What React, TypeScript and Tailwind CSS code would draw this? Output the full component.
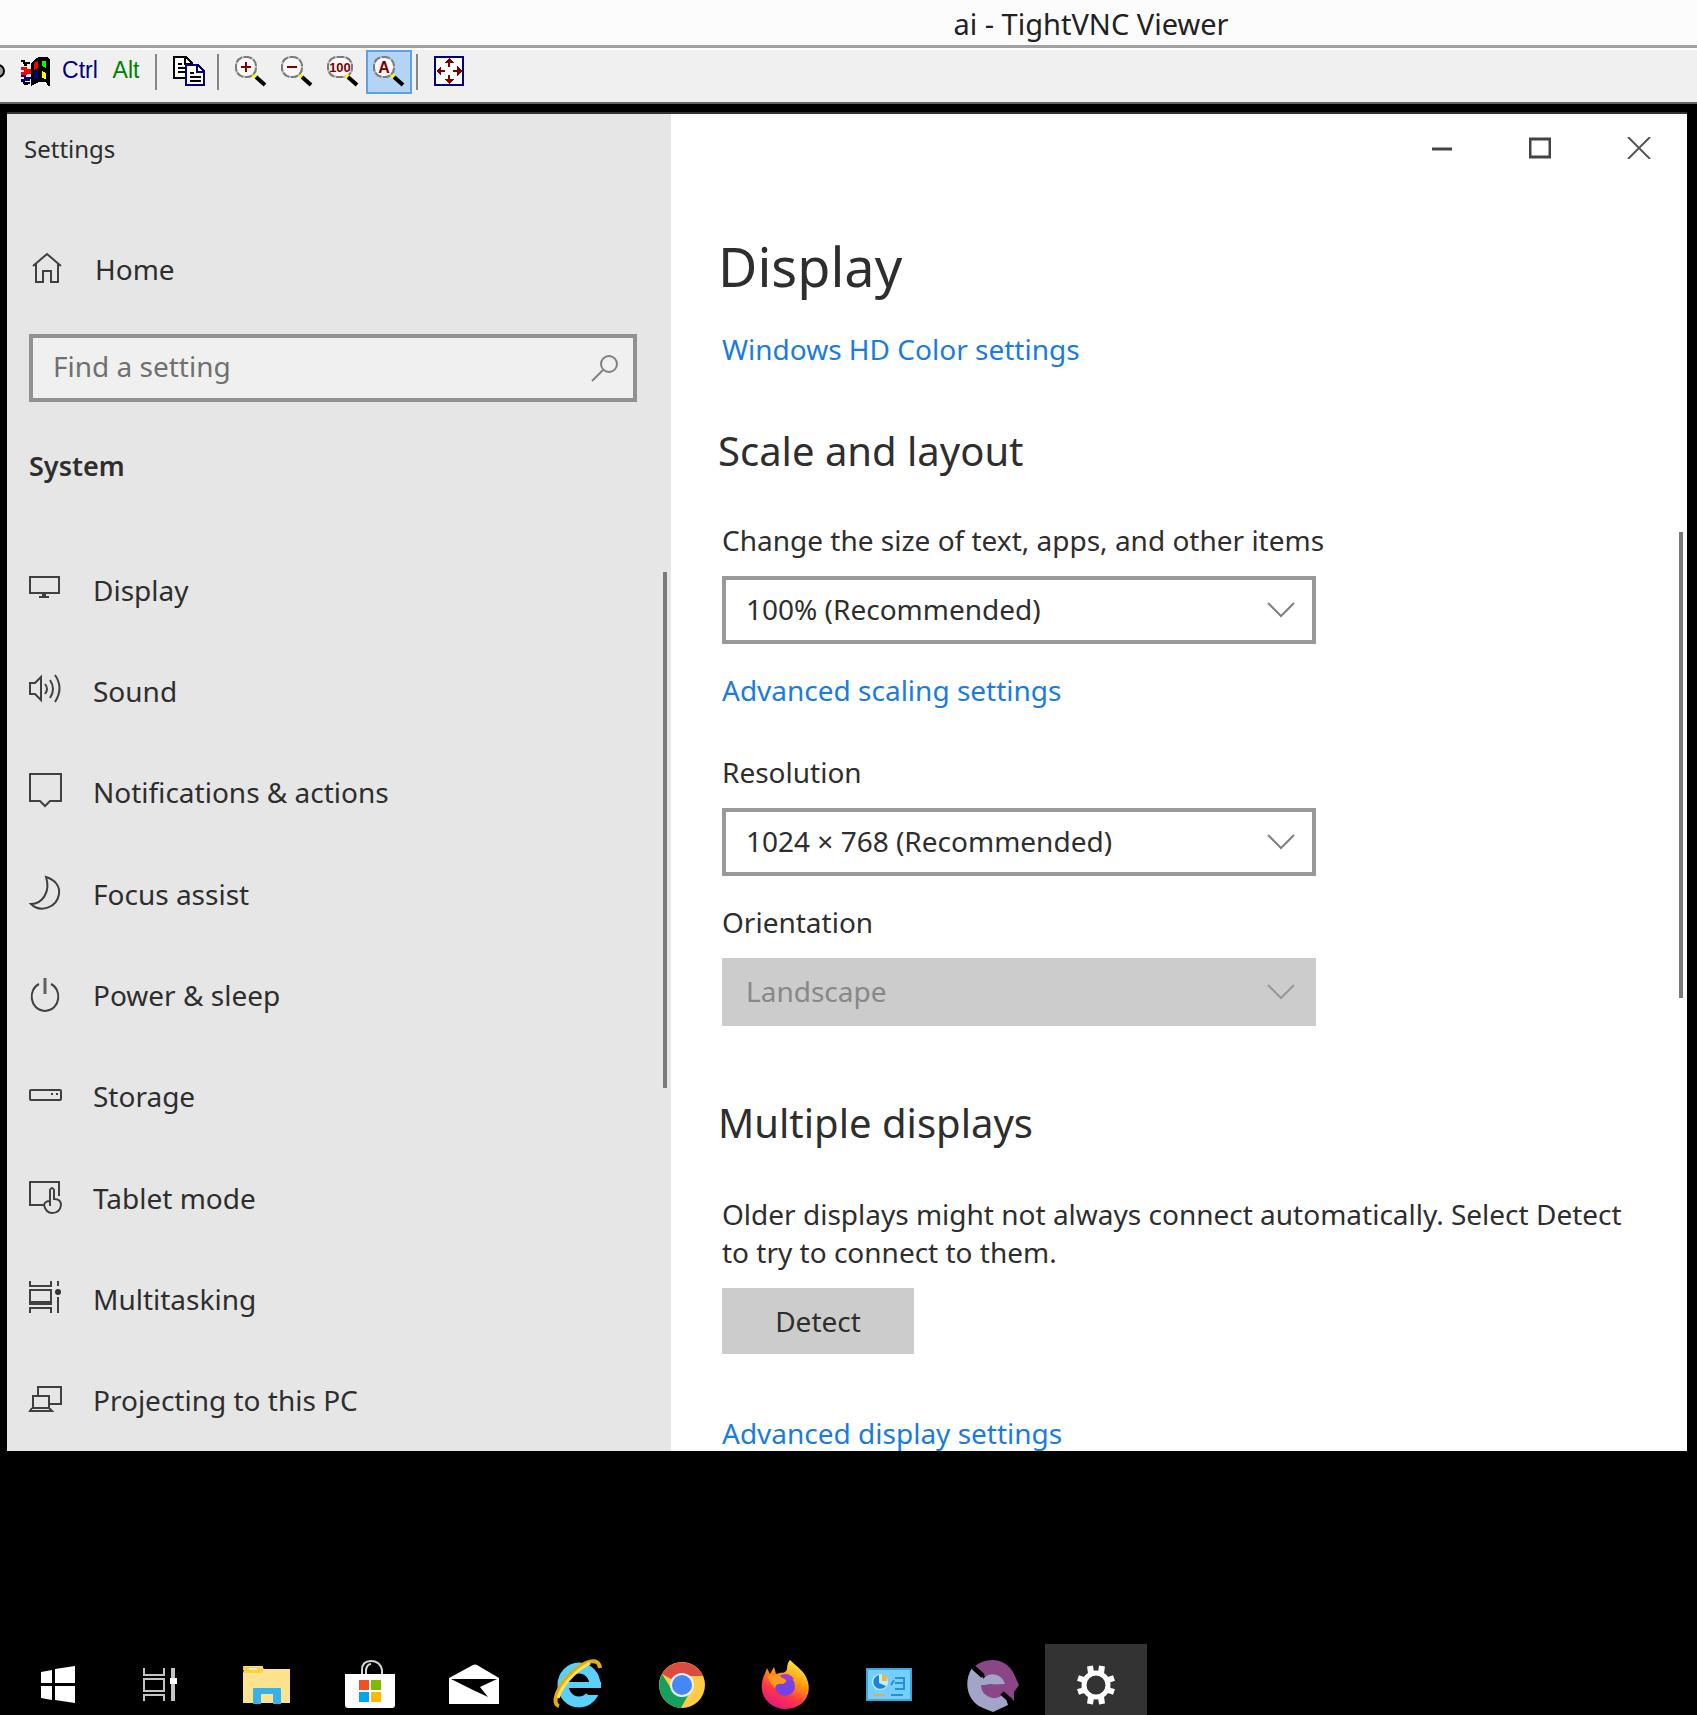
import { useState } from "react";
import type { ReactNode } from "react";

/* ---------- viewer toolbar icons ---------- */

function Magnifier({ children, wide = false }: { children: ReactNode; wide?: boolean }) {
  return (
    <svg width="32" height="32" viewBox="0 0 32 32" aria-hidden="true">
      <rect x="1" y="1" width={wide ? 24 : 20} height="20" rx="9" fill="#f8f8f8" stroke="#b4b4b4" strokeWidth="2" />
      <rect
        x="1"
        y="1"
        width={wide ? 24 : 20}
        height="20"
        rx="9"
        fill="none"
        stroke="#7b7b7b"
        strokeWidth="2"
        strokeDasharray="7 2"
      />
      {children}
      <path d="M19 19l3 3" stroke="#ffff00" strokeWidth="4" />
      <path d="M21 21l9 8" stroke="#000" strokeWidth="4" />
    </svg>
  );
}

function FlagIcon() {
  return (
    <svg width="32" height="32" viewBox="0 0 32 32" shapeRendering="crispEdges" aria-hidden="true">
      <path d="M11 7l4-4 4-2h8l3 2v27h-2l-2-4h-7l-4 2-4 2z" fill="#000" />
      <path d="M1 5h3v2h6M1 25h3v2h6M4 9h3M4 28h4" stroke="#000" strokeWidth="2" fill="none" />
      <path d="M1 12h4v2h6M1 17h4v-1h6" stroke="#ff0000" strokeWidth="3" fill="none" />
      <path d="M1 20h4v2h6M1 24h9" stroke="#000080" strokeWidth="2" fill="none" />
      <path d="M14 7l4-2v7l-4 2z" fill="#ff0000" />
      <path d="M22 5h4v7l-4-2z" fill="#00ff00" />
      <path d="M14 17l4-2v7l-4 2z" fill="#000080" />
      <path d="M22 15l4 2v6l-4-1z" fill="#ffff00" />
    </svg>
  );
}

function CopyIcon() {
  return (
    <svg width="32" height="32" viewBox="0 0 32 32" shapeRendering="crispEdges" aria-hidden="true">
      <path d="M1 1h12l6 6v15H1z" fill="#fff" stroke="#000" strokeWidth="2" />
      <path d="M12 1v7h7M5 8h4M5 12h8M5 16h8" fill="none" stroke="#000" strokeWidth="2" />
      <path d="M13 9h12l6 6v14H13z" fill="#fff" stroke="#000080" strokeWidth="2" />
      <path d="M24 9v7h7" fill="none" stroke="#000080" strokeWidth="2" />
      <path d="M17 17h4M17 21h11M17 25h11" stroke="#000" strokeWidth="2" />
    </svg>
  );
}

function FullScreenIcon() {
  return (
    <svg width="32" height="32" viewBox="0 0 32 32" shapeRendering="crispEdges" aria-hidden="true">
      <rect x="2" y="1" width="28" height="28" fill="#fff" stroke="#000080" strokeWidth="2" />
      <path
        d="M16 2l5 5h-4v4h-2V7h-4zM16 28l5-5h-4v-4h-2v4h-4zM3 15l5-5v4h4v2H8v4zM29 15l-5-5v4h-4v2h4v4z"
        fill="#800000"
      />
    </svg>
  );
}

/* ---------- settings icons ---------- */

function NavIcon({ children }: { children: ReactNode }) {
  return (
    <svg
      width="34"
      height="40"
      viewBox="2 0 34 40"
      fill="none"
      stroke="#404040"
      strokeWidth="2"
      className="shrink-0 overflow-visible"
      aria-hidden="true"
    >
      {children}
    </svg>
  );
}

const navItems: { name: string; icon: ReactNode }[] = [
  {
    name: "Display",
    icon: (
      <>
        <path d="M3 7h29v16H3zM12 27h10" />
        <path d="M17 23v4" strokeWidth="4" />
      </>
    ),
  },
  {
    name: "Sound",
    icon: <path d="M3 12h5l6-6v23l-6-6H3zM18 13q4 5 0 10M23 9q6 9 0 18M28 4q9 13 0 27" />,
  },
  {
    name: "Notifications & actions",
    icon: <path d="M3 2h31v27H23l-5 5-5-5H3z" />,
  },
  {
    name: "Focus assist",
    icon: <path d="M19 3C29 6 33 13 32 20C30 34 13 39 4 30C15 30 24 18 19 3z" />,
  },
  {
    name: "Power & sleep",
    icon: (
      <>
        <path d="M12 9C1 14 2 35 18 36C34 35 35 14 24 9" />
        <path d="M18 3v16" stroke="#606060" strokeWidth="3" />
      </>
    ),
  },
  {
    name: "Storage",
    icon: (
      <>
        <rect x="3" y="14" width="31" height="10" rx="1" />
        <path d="M24 18h2M29 18h2" />
      </>
    ),
  },
  {
    name: "Tablet mode",
    icon: <path d="M17 27H3V4h29v14M23 28V12q2-4 4 0v9q7 0 7 6q-1 8-9 8q-6 0-8-8q1-4 6-4" />,
  },
  {
    name: "Multitasking",
    icon: (
      <>
        <path d="M3 2v5h21V2M3 11h21v14H3zM3 34v-5h21v5M31 2v5M31 18v16" />
        <path d="M3 24h21" strokeWidth="4" />
        <circle cx="31" cy="13" r="3" fill="#333" stroke="none" />
      </>
    ),
  },
  {
    name: "Projecting to this PC",
    icon: <path d="M11 15V7h23v17H23M6 16h16v12H6zM5 28l-2 3h22l-3-3" />,
  },
];

/* ---------- taskbar icons ---------- */

const taskbarItems: { name: string; icon: ReactNode }[] = [
  {
    name: "Start",
    icon: <path d="M13 16l11-2v13H13zM27 13l20-3v17H27zM13 30h11v14l-11-2zM27 30h20v17l-20-3z" fill="#fff" />,
  },
  {
    name: "Task View",
    icon: (
      <g fill="none" stroke="#c4c4c4" strokeWidth="2">
        <path d="M12 12v7h20v-7M12 23h20v12H12zM12 45v-6h20v6" />
        <path d="M41 12v33" strokeWidth="4" />
        <rect x="38" y="22" width="7" height="6" fill="#fff" stroke="none" />
      </g>
    ),
  },
  {
    name: "File Explorer",
    icon: (
      <>
        <path d="M7 10h20v4H7z" fill="#f5c32c" />
        <path d="M7 17l2-7h16l3 3h26v34H7z" fill="#fde38d" />
        <path d="M9 11h16l3 3-3 3H8z" fill="#fcd03e" />
        <path d="M13 13h8" stroke="#d9f2e0" strokeWidth="2" />
        <path d="M17 48V33q0-1 1-1h26q1 0 1 1v15h-8V38H25v10z" fill="#36b1ea" />
      </>
    ),
  },
  {
    name: "Microsoft Store",
    icon: (
      <>
        <path d="M22 19V14q0-9 9-9t11 9v5M26 19v-5q1-6 5-6" fill="none" stroke="#d6d6d6" strokeWidth="2" />
        <path d="M5 18h50v31q0 3-3 3H8q-3 0-3-3z" fill="#fff" />
        <path d="M19 24h10v10H19z" fill="#f25022" />
        <path d="M31 24h10v10H31z" fill="#7fba00" />
        <path d="M19 36h10v10H19z" fill="#00a4ef" />
        <path d="M31 36h10v10H31z" fill="#ffb900" />
      </>
    ),
  },
  {
    name: "Mail",
    icon: (
      <>
        <path d="M5 22L29 9q2-1 4 0l22 13v26H5z" fill="#fff" />
        <path d="M7 23h46L36 31l8 10-15-7z" fill="#000" />
      </>
    ),
  },
  {
    name: "Internet Explorer",
    icon: (
      <>
        <ellipse cx="31" cy="29" rx="16" ry="17" fill="none" stroke="#5bd0f8" strokeWidth="11" />
        <path d="M33 32h23v7H40z" fill="#000" />
        <path d="M20 26h33v6H20z" fill="#5bd0f8" />
        <path d="M11 50C3 48 9 30 25 16C38 4 51 1 52 12" fill="none" stroke="#e5ab12" strokeWidth="4" />
        <path d="M10 42C13 31 25 16 42 7" fill="none" stroke="#ffe45c" strokeWidth="3" />
      </>
    ),
  },
  {
    name: "Google Chrome",
    icon: (
      <>
        <circle cx="30" cy="29" r="23" fill="#fc4" />
        <path d="M30 29L10 18A23 23 0 0 1 51 20H30z" fill="#db4b3f" />
        <path d="M10 18A23 23 0 0 0 29 52L39 34L20 34z" fill="#17a05d" />
        <circle cx="30" cy="29" r="12" fill="#e8efff" />
        <circle cx="30" cy="29" r="10" fill="#4587f3" />
      </>
    ),
  },
  {
    name: "Firefox",
    icon: (
      <>
        <defs>
          <linearGradient id="fox" x1="0.8" y1="0" x2="0.3" y2="1">
            <stop offset="0" stopColor="#fff44f" />
            <stop offset="0.4" stopColor="#ff980e" />
            <stop offset="0.7" stopColor="#ff3647" />
            <stop offset="1" stopColor="#e31587" />
          </linearGradient>
        </defs>
        <path
          d="M34 4C42 12 49 15 52 26C56 42 44 53 30 53C14 53 4 41 6 27C7 20 10 16 11 12L14 18L18 11L20 18C25 16 30 18 31 13C31 9 32 6 34 4z"
          fill="url(#fox)"
        />
        <circle cx="29" cy="30" r="10" fill="#7542e5" />
        <path d="M23 20Q32 15 38 23L33 25z" fill="#9f3bd9" />
        <path d="M11 20Q24 17 26 22Q34 24 27 28Q20 27 19 32Q14 27 11 20z" fill="#ff9a1f" />
      </>
    ),
  },
  {
    name: "Control Panel",
    icon: (
      <>
        <rect x="6" y="12" width="46" height="33" fill="#3fa7dc" />
        <rect x="8" y="14" width="42" height="29" fill="#74d0fb" />
        <circle cx="20" cy="26" r="8" fill="#c8ecfd" />
        <path d="M19 19v8l7 3a7 7 0 1 1-7-11z" fill="#1b86d2" />
        <path d="M22 18a7 7 0 0 1 5 7h-5z" fill="#fbb321" />
        <path d="M31 29l3-5M35 22h9v11h-9M35 27h9" fill="none" stroke="#2a90d0" strokeWidth="2" />
        <path d="M13 39h12" stroke="#e0b04a" strokeWidth="2" />
        <path d="M31 39h12" stroke="#2a90d0" strokeWidth="2" />
      </>
    ),
  },
  {
    name: "Browser",
    icon: (
      <>
        <path d="M11 10C23 0 43 2 50 18L55 29L50 36L50 45L39 36L30 30z" fill="#8b4687" />
        <path d="M8 12C-1 26 3 46 19 52L29 56L44 49L40 36L24 32L17 18z" fill="#a3a5c8" />
        <path d="M17 29h32v10l-9-2Q36 43 28 42Q17 39 17 29z" fill="#8b4687" />
        <path d="M16 29A13 14 0 0 1 41 28z" fill="#a3a5c8" />
        <path d="M9 11l10 9M38 37l9 8" stroke="#000" strokeWidth="5" />
      </>
    ),
  },
  {
    name: "Settings",
    icon: (
      <>
        <circle cx="28" cy="29" r="12" fill="none" stroke="#fff" strokeWidth="5" />
        <path
          d="M23 17l-1-7M33 17l1-7M23 41l-1 7M33 41l1 7M16 24l-6-2M16 34l-6 2M40 24l6-2M40 34l6 2"
          stroke="#fff"
          strokeWidth="6"
        />
      </>
    ),
  },
];

/* ---------- building blocks ---------- */

function Separator() {
  return <span className="mt-1 h-9 w-[2px] shrink-0 bg-[#868686]" />;
}

function ToolButton({ label, active, children }: { label: string; active?: boolean; children: ReactNode }) {
  return (
    <button
      type="button"
      aria-label={label}
      className={`flex h-11 w-[46px] shrink-0 items-center justify-center ${
        active ? "border-2 border-[#5f9fe3] bg-[#b3d4f4]" : ""
      }`}
    >
      {children}
    </button>
  );
}

function SelectField({
  id,
  label,
  value,
  disabled,
  className,
}: {
  id: string;
  label: string;
  value: string;
  disabled?: boolean;
  className: string;
}) {
  return (
    <div className={className}>
      <label htmlFor={id} className="block leading-[38px]">
        {label}
      </label>
      <div className="relative mt-[17px] max-w-[594px]">
        <select
          id={id}
          disabled={disabled}
          className="block h-[68px] w-full appearance-none border-4 border-[#999999] bg-white pb-[2px] pl-5 disabled:border-[#cccccc] disabled:bg-[#cccccc] disabled:text-[#888888] disabled:opacity-100"
        >
          <option>{value}</option>
        </select>
        <svg
          width="28"
          height="18"
          viewBox="0 0 28 18"
          className="pointer-events-none absolute top-[25px] right-[21px]"
          aria-hidden="true"
        >
          <path d="M1 2l13 13L27 2" fill="none" stroke={disabled ? "#999999" : "#808080"} strokeWidth="2" />
        </svg>
      </div>
    </div>
  );
}

function TextLink({ className, children }: { className: string; children: ReactNode }) {
  return (
    <a href="#" className={`block self-start leading-9 text-[#1a7be0] ${className}`}>
      {children}
    </a>
  );
}

export default function App() {
  const [query, setQuery] = useState("");

  return (
    <div className="flex min-h-screen flex-col bg-black font-['Noto_Sans','Open_Sans',sans-serif] text-[28px] text-[#2e2e2e]">
      {/* Viewer title bar */}
      <header className="flex h-12 items-center justify-center border-b-[3px] border-[#a0a0a0] bg-[#fcfcfc] pt-[2px] pl-[485px] text-[29px] leading-9 whitespace-nowrap text-[#222222]">
        ai - TightVNC Viewer
      </header>

      {/* Viewer toolbar */}
      <div className="flex h-14 items-start overflow-hidden border-t-2 border-b-2 border-t-white border-b-[#646464] bg-[#f0f0f0]">
        <div className="flex h-11 w-[13px] shrink-0 items-center overflow-hidden">
          <svg width="6" height="16" viewBox="0 0 6 16" aria-hidden="true">
            <circle cx="-2" cy="7" r="6" fill="#a0a0a0" stroke="#000" strokeWidth="2" />
          </svg>
        </div>
        <ToolButton label="Send Ctrl+Esc">
          <FlagIcon />
        </ToolButton>
        <button
          type="button"
          className="h-11 w-[46px] pr-1 pb-1 font-['Liberation_Sans',sans-serif] text-[23px] text-[#000080]"
        >
          Ctrl
        </button>
        <button
          type="button"
          className="h-11 w-[46px] pr-1 pb-1 font-['Liberation_Sans',sans-serif] text-[23px] text-[#008000]"
        >
          Alt
        </button>
        <div className="flex px-1">
          <Separator />
        </div>
        <div className="flex px-[5px]">
          <ToolButton label="Copy">
            <CopyIcon />
          </ToolButton>
        </div>
        <Separator />
        <div className="flex pr-1 pl-[9px]">
          <ToolButton label="Zoom in">
            <Magnifier>
              <path d="M6 11h10M11 6v10" stroke="#800000" strokeWidth="2" />
            </Magnifier>
          </ToolButton>
          <ToolButton label="Zoom out">
            <Magnifier>
              <path d="M6 11h10" stroke="#800000" strokeWidth="2" />
            </Magnifier>
          </ToolButton>
          <ToolButton label="Actual size">
            <Magnifier wide>
              <text x="13" y="16" textAnchor="middle" fontSize="13" fontWeight="700" fontFamily="Liberation Sans, sans-serif" fill="#800000">
                100
              </text>
            </Magnifier>
          </ToolButton>
          <ToolButton label="Fit to window" active>
            <Magnifier>
              <text x="11" y="17" textAnchor="middle" fontSize="16" fontWeight="700" fontFamily="Liberation Sans, sans-serif" fill="#800000">
                A
              </text>
            </Magnifier>
          </ToolButton>
        </div>
        <Separator />
        <div className="flex pl-2">
          <ToolButton label="Full screen">
            <FullScreenIcon />
          </ToolButton>
        </div>
      </div>

      {/* Settings window */}
      <div className="mt-2 mr-[10px] ml-[7px] flex border-t-2 border-[#333333]">
        <aside className="relative flex w-[664px] shrink-0 flex-col bg-[#e6e6e6] pl-[22px]">
          <div className="-ml-[5px] flex h-[68px] items-center pt-[2px] text-2xl">Settings</div>

          <a href="#" className="mt-[67px] flex h-10 items-center gap-8">
            <NavIcon>
              <path d="M6 17L20 5l14 12M9 15v18h7V22h8v11h7V15" />
            </NavIcon>
            Home
          </a>

          <div className="relative mt-[45px] mr-[34px]">
            <input
              type="text"
              aria-label="Find a setting"
              placeholder="Find a setting"
              value={query}
              onChange={(e) => setQuery(e.target.value)}
              className="block h-[68px] w-full border-4 border-[#919191] bg-[#f0f0f0] pr-16 pb-1 pl-5 placeholder:text-[#707070]"
            />
            <svg
              width="30"
              height="30"
              viewBox="0 0 30 30"
              fill="none"
              stroke="#808080"
              strokeWidth="2"
              className="absolute top-5 right-4"
              aria-hidden="true"
            >
              <circle cx="18" cy="10" r="8" />
              <path d="M12 16L1 27" />
            </svg>
          </div>

          <h2 className="mt-[46px] text-[27px] leading-9 font-semibold">System</h2>

          <nav className="mt-[55px] flex flex-1 flex-col">
            {navItems.map((item) => (
              <a key={item.name} href="#" className="flex min-h-12 flex-1 items-center gap-[30px]">
                <NavIcon>{item.icon}</NavIcon>
                {item.name}
              </a>
            ))}
          </nav>

          {/* Scroll thumb */}
          <span className="absolute top-[458px] right-1 h-[516px] w-1 bg-[#7a7a7a]" />
        </aside>

        <main className="relative flex flex-1 flex-col bg-white pl-[51px]">
          <div className="flex h-[68px] items-center justify-end gap-[76px] pr-9">
            <button type="button" aria-label="Minimize">
              <svg width="22" height="22" viewBox="0 0 22 22" aria-hidden="true">
                <path d="M1 12h20" stroke="#444" strokeWidth="3" />
              </svg>
            </button>
            <button type="button" aria-label="Maximize">
              <svg width="22" height="22" viewBox="0 0 22 22" aria-hidden="true">
                <path d="M1 2h20v18H1z" fill="none" stroke="#444" strokeWidth="3" />
              </svg>
            </button>
            <button type="button" aria-label="Close">
              <svg width="24" height="22" viewBox="0 0 24 22" aria-hidden="true">
                <path d="M1 0l22 22M23 0L1 22" stroke="#555" strokeWidth="2" />
              </svg>
            </button>
          </div>

          <h1 className="mt-12 -ml-1 text-[54px] leading-[72px]">Display</h1>
          <TextLink className="mt-[29px]">Windows HD Color settings</TextLink>

          <h2 className="mt-[58px] -ml-1 text-[40px] leading-[52px]">Scale and layout</h2>
          <SelectField
            id="scale"
            label="Change the size of text, apps, and other items"
            value="100% (Recommended)"
            className="mt-11"
          />
          <TextLink className="mt-7">Advanced scaling settings</TextLink>
          <SelectField id="resolution" label="Resolution" value="1024 × 768 (Recommended)" className="mt-[45px]" />
          <SelectField id="orientation" label="Orientation" value="Landscape" disabled className="mt-[27px]" />

          <h2 className="mt-[71px] -ml-1 text-[40px] leading-[52px]">Multiple displays</h2>
          <p className="mt-[46px] max-w-[920px] leading-[38px]">
            Older displays might not always connect automatically. Select Detect to try to connect to them.
          </p>
          <button type="button" className="mt-[17px] h-[66px] w-48 self-start bg-[#cccccc]">
            Detect
          </button>
          <TextLink className="mt-[61px]">Advanced display settings</TextLink>

          {/* Scroll thumb */}
          <span className="absolute top-[418px] right-1 h-[466px] w-1 bg-[#7a7a7a]" />
        </main>
      </div>

      {/* Remote taskbar */}
      <footer className="mt-auto flex gap-[2px] overflow-hidden pl-[5px]">
        {taskbarItems.map((item) => (
          <button
            key={item.name}
            type="button"
            aria-label={item.name}
            className={`flex h-[71px] w-[102px] shrink-0 justify-center pt-3 ${
              item.name === "Settings" ? "bg-[#333333]" : ""
            }`}
          >
            <svg width="56" height="56" viewBox="0 0 56 56" aria-hidden="true">
              {item.icon}
            </svg>
          </button>
        ))}
      </footer>
    </div>
  );
}
